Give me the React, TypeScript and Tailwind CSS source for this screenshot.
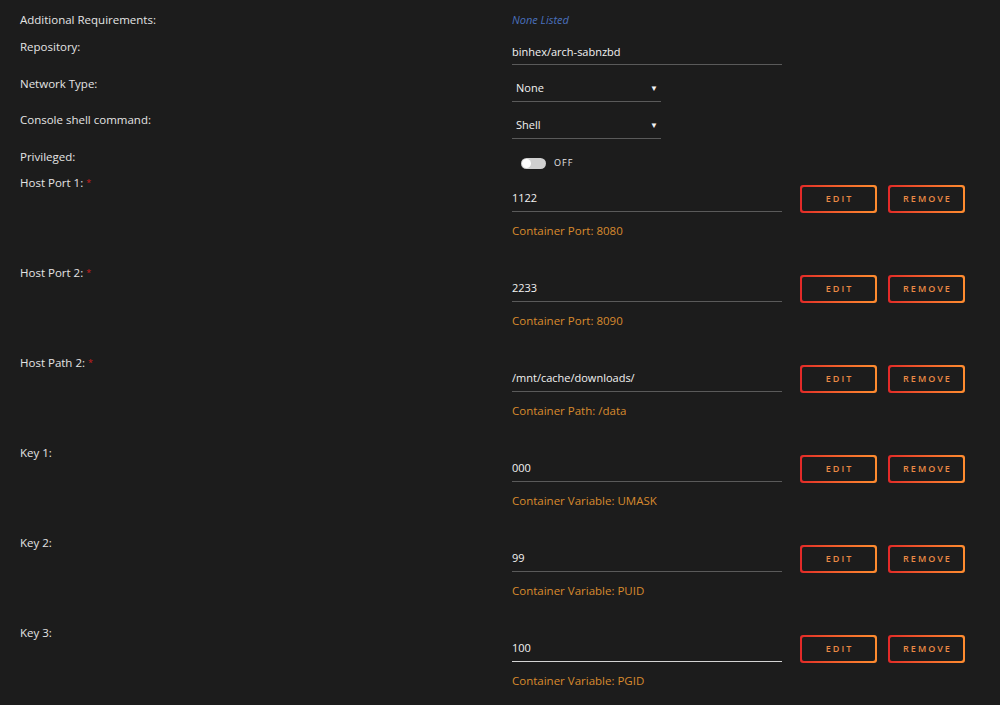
import React from "react";

const font = { fontFamily: '"Open Sans", "Noto Sans", sans-serif' };

function Btn({ label }: { label: string }) {
  return (
    <div className="h-[28px] w-[77px] rounded-[3px] bg-gradient-to-r from-[#e22828] to-[#ff8c2f] p-[2px]">
      <div className="flex h-full w-full items-center justify-center rounded-[2px] bg-[#1c1c1c] pl-[2px] text-[9px] font-semibold tracking-[2px] text-[#eb8a45]">
        {label}
      </div>
    </div>
  );
}

function Label({ text, req }: { text: string; req?: boolean }) {
  return (
    <div className="w-[512px] shrink-0 pl-[20px] text-[11.5px] leading-[16px] text-[#e4e4e4]">
      {text}
      {req && <span className="ml-[3px] align-top text-[9px] text-[#c81e1e]">*</span>}
    </div>
  );
}

function Block({
  label,
  value,
  helper,
  focused,
}: {
  label: string;
  value: string;
  helper: string;
  focused?: boolean;
}) {
  return (
    <div className="flex h-[90px]">
      <Label text={label} req={label.startsWith("Host")} />
      <div className="flex flex-col">
        <div className="mt-[10px] flex items-start">
          <div
            className={`mt-[5px] h-[22px] w-[270px] border-b text-[11px] leading-[16px] text-[#f2f2f2] ${
              focused ? "border-[#d4d4d4]" : "border-[#5a5a5a]"
            }`}
          >
            {value}
          </div>
          <div className="ml-[18px] flex gap-[11px]">
            <Btn label="EDIT" />
            <Btn label="REMOVE" />
          </div>
        </div>
        <div className="mt-[10px] text-[11.5px] leading-[16px] text-[#d88a2e]">{helper}</div>
      </div>
    </div>
  );
}

function Select({ value }: { value: string }) {
  return (
    <div className="flex h-[22px] w-[149px] items-start justify-between border-b border-[#5a5a5a] pl-[4px] pr-[3px] text-[11px] leading-[16px] text-[#f2f2f2]">
      <span>{value}</span>
      <span className="text-[8px] leading-[16px]">▼</span>
    </div>
  );
}

export default function App() {
  return (
    <div className="min-h-[705px] w-[1000px] bg-[#1c1c1c] pt-[12px]" style={font}>
      <div className="flex h-[27px]">
        <Label text="Additional Requirements:" />
        <div className="text-[11px] italic leading-[16px] text-[#4a70bd]">None Listed</div>
      </div>
      <div className="flex h-[37px]">
        <Label text="Repository:" />
        <div className="mt-[5px] h-[21px] w-[270px] border-b border-[#5a5a5a] text-[11px] leading-[16px] text-[#f2f2f2]">
          binhex/arch-sabnzbd
        </div>
      </div>
      <div className="flex h-[36px]">
        <Label text="Network Type:" />
        <div className="mt-[4px]">
          <Select value="None" />
        </div>
      </div>
      <div className="flex h-[37px]">
        <Label text="Console shell command:" />
        <div className="mt-[5px]">
          <Select value="Shell" />
        </div>
      </div>
      <div className="flex h-[26px]">
        <Label text="Privileged:" />
        <div className="mt-[2px] flex items-center pl-[9px]">
          <div className="relative h-[11px] w-[25px] rounded-full bg-[#d0d0d0]">
            <div className="absolute left-[1px] top-[1px] h-[9px] w-[9px] rounded-full bg-white" />
          </div>
          <span className="ml-[8px] text-[9px] tracking-[1px] text-[#e4e4e4]">OFF</span>
        </div>
      </div>
      <Block label="Host Port 1:" value="1122" helper="Container Port: 8080" />
      <Block label="Host Port 2:" value="2233" helper="Container Port: 8090" />
      <Block label="Host Path 2:" value="/mnt/cache/downloads/" helper="Container Path: /data" />
      <Block label="Key 1:" value="000" helper="Container Variable: UMASK" />
      <Block label="Key 2:" value="99" helper="Container Variable: PUID" />
      <Block label="Key 3:" value="100" helper="Container Variable: PGID" focused />
    </div>
  );
}
